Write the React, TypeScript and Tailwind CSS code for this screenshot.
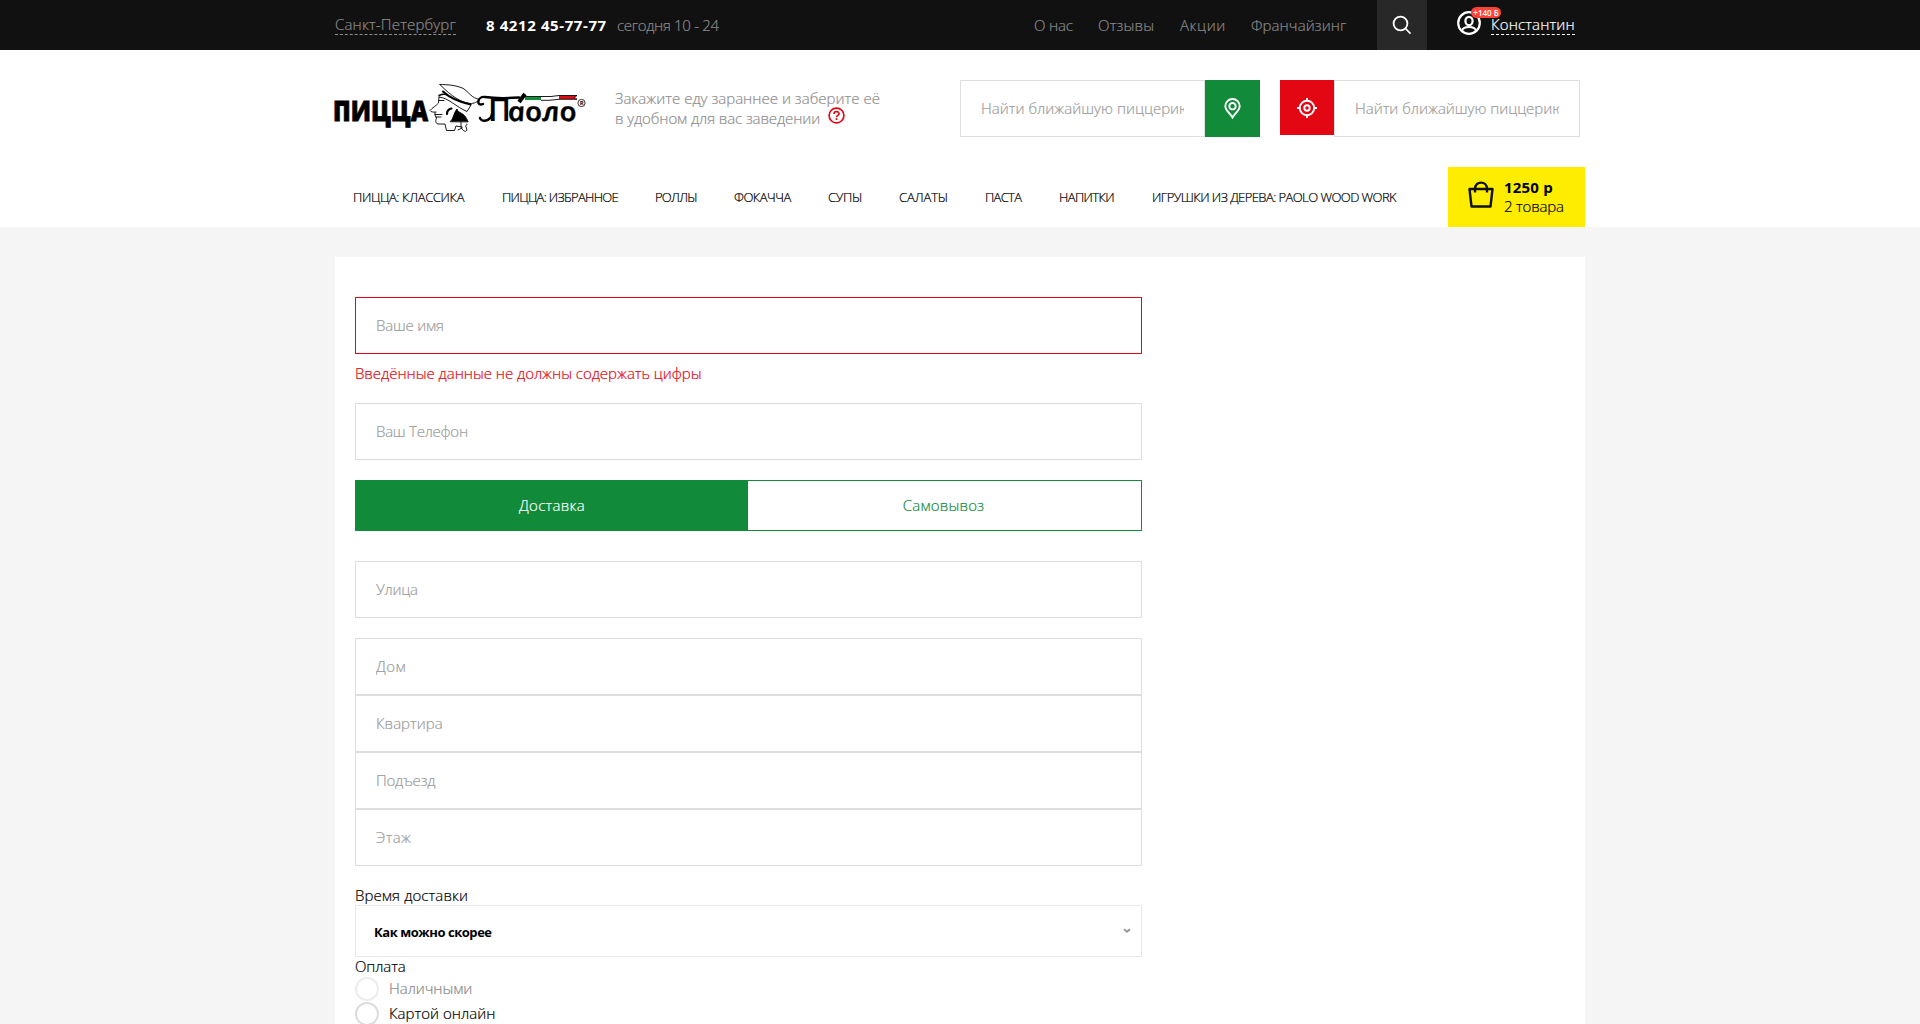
import type { ReactNode } from "react";

const navItems = [
  { label: "ПИЦЦА: КЛАССИКА", cls: "w-[149px] tracking-[-0.36px]" },
  { label: "ПИЦЦА: ИЗБРАННОЕ", cls: "w-[153px] tracking-[-0.7px]" },
  { label: "РОЛЛЫ", cls: "w-[79px] tracking-[-0.75px]" },
  { label: "ФОКАЧЧА", cls: "w-[94px] tracking-[-0.5px]" },
  { label: "СУПЫ", cls: "w-[71px] tracking-[-0.3px]" },
  { label: "САЛАТЫ", cls: "w-[86px] tracking-[-0.1px]" },
  { label: "ПАСТА", cls: "w-[74px] tracking-[-0.68px]" },
  { label: "НАПИТКИ", cls: "w-[93px] tracking-[-0.62px]" },
  { label: "ИГРУШКИ ИЗ ДЕРЕВА: PAOLO WOOD WORK", cls: "w-[260px] tracking-[-0.57px]" },
];

function Field({ placeholder, cls = "" }: { placeholder: string; cls?: string }) {
  return (
    <input
      placeholder={placeholder}
      className={`block h-[57px] w-full border bg-white px-5 pb-0.5 text-[15px] font-light placeholder:text-[#9c9c9c] ${cls}`}
    />
  );
}

function Logo() {
  return (
    <svg width="252" height="52" viewBox="0 0 252 52" className="block shrink-0 overflow-visible">
      <text x="-2" y="37" fontSize="29" fontWeight="800" stroke="#000" strokeWidth="0.8" textLength="95" lengthAdjust="spacingAndGlyphs" fontFamily="Open Sans, sans-serif">
        ПИЦЦА
      </text>
      <g fill="none" stroke="#000" strokeWidth="0.9" strokeLinejoin="round" strokeLinecap="round">
        <path d="M105 .6C112 .5 120 1 128 4.3C134 8 136 14 145 15.5C141 19 137 20 134 19.3C126 18 117 13 105 .6Z" fill="#fff" />
        <path d="M108 7.500C115 14 124 18 135.500 20.500" strokeWidth="2" />
        <path d="M104 11.500C108 9.500 111 10 113 11.500" strokeWidth="1.500" />
        <path d="M104 13C114 14 121 23 132 27.500L136 21" />
        <path d="M104 13L103.500 19C101 22 97 24 95 26.500C96 28.500 99 28 101 28M104 16.500H109M100 30.500H107M101 33H106M100 28.500V31L101.500 34C100 38 101 40 104 40H110L111.500 46.500H119.500L121 42L127 43" />
        <path d="M126 38V43C128 48 133 49 131.500 44C129 40 133 42 132 40M127 44L123 46" />
        <path d="M112 30C112 27 114 25 116.500 24.500" strokeWidth="2.200" />
        <path d="M115.500 37.500C118.500 35 118.500 29 122 25C123 30 129 27 133 37.500Z" fill="#000" />
      </g>
      <text x="153" y="37" fontSize="33" fontWeight="600" textLength="23" lengthAdjust="spacingAndGlyphs" fontFamily="Open Sans, sans-serif">
        П
      </text>
      <text transform="translate(174 37) skewX(10)" fontSize="27" fontWeight="600" fontStyle="italic" stroke="#000" strokeWidth="0.4" textLength="69" lengthAdjust="spacingAndGlyphs" fontFamily="Open Sans, sans-serif">
        аоло
      </text>
      <g fill="none" stroke="#000" strokeLinecap="round">
        <path d="M157 30C156 37 146 39 145 34M148 20C141 23 142 12 150 13C160 14.500 170 14.500 184 13.500" strokeWidth="2.400" />
        <path d="M184 18L190 10" strokeWidth="4" strokeLinecap="butt" />
      </g>
      <path d="M190 13H206V16H190Z" fill="#109038" />
      <path d="M206 13H216L224 12V15L214 16H206Z" fill="#fff" />
      <path d="M224 12H240V15H224Z" fill="#e00a14" />
      <path d="M190 12.500H216L224 11.500H242L239.500 13.500L242 15.300H224L214 16.300H206" fill="none" stroke="#000" strokeWidth="0.900" />
      <circle cx="246.500" cy="19" r="3.600" fill="none" stroke="#000" strokeWidth="0.800" />
      <text x="244.700" y="21.200" fontSize="6" fontWeight="700" fontFamily="Open Sans, sans-serif">R</text>
    </svg>
  );
}

function Radio({ label, faded, cls }: { label: string; faded?: boolean; cls: string }) {
  return (
    <label className={`flex h-[25px] items-start ${cls}`}>
      <span className={`mr-2.5 h-6 w-6 rounded-full border-2 ${faded ? "border-[#ececec]" : "border-[#dcdcdc]"}`} />
      <span className={`leading-[23px] ${faded ? "text-[#888]" : ""}`}>{label}</span>
    </label>
  );
}

function TopLink({ children, cls }: { children: ReactNode; cls: string }) {
  return <a className={`leading-5 ${cls}`}>{children}</a>;
}

export default function App() {
  return (
    <div className="h-[1024px] overflow-hidden bg-[#f5f5f5] font-['Open_Sans',sans-serif] text-[15px] font-light text-black [-webkit-text-stroke:0.2px]">
      <div className="h-[50px] bg-[#111]">
        <div className="mx-auto flex h-full w-[1250px] items-start whitespace-nowrap text-[#8a8a8a]">
          <div className="mt-[14px] h-[21px] w-[121px] border-b border-dashed border-[#8e8e8e] leading-5 tracking-[0.17px]">Санкт-Петербург</div>
          <div className="mt-[15px] ml-[30px] w-[131px] font-bold leading-5 tracking-[0.6px] text-white [-webkit-text-stroke:0px]">8 4212 45-77-77</div>
          <div className="mt-[15px] w-[417px] leading-5 tracking-[-0.32px]">сегодня 10 - 24</div>
          <nav className="mt-[15px] flex">
            <TopLink cls="w-16 tracking-[-0.15px]">О нас</TopLink>
            <TopLink cls="w-[82px] tracking-[0.18px]">Отзывы</TopLink>
            <TopLink cls="w-[71px] tracking-[0.6px]">Акции</TopLink>
            <TopLink cls="w-[126px] tracking-[0.1px]">Франчайзинг</TopLink>
          </nav>
          <button className="flex h-[50px] w-[50px] items-center justify-center bg-[#282828]">
            <svg width="20" height="20" viewBox="0 0 20 20" fill="none" stroke="#fff" strokeWidth="1.800">
              <circle cx="8.500" cy="8.500" r="6.900" />
              <path d="M13.500 13.500L18.500 18.700" />
            </svg>
          </button>
          <div className="relative mt-[11px] ml-[30px] h-6 w-6">
            <svg width="24" height="24" viewBox="0 0 24 24" fill="none" stroke="#fff" strokeWidth="2.200">
              <circle cx="12" cy="12" r="10.800" />
              <ellipse cx="12" cy="10" rx="3.600" ry="4.200" />
              <path d="M5 19.500C6 16.500 9 16 12 16S18 16.500 19 19.500" />
            </svg>
            <span className="absolute -top-1 left-3.5 h-[11px] w-[30px] rounded-md bg-[#ff4437] text-center text-[8px] leading-[11px] font-semibold text-white [-webkit-text-stroke:0px]">+140 Б</span>
          </div>
          <div className="mt-[14px] ml-2.5 h-[21px] w-[84px] border-b border-dashed border-white leading-5 tracking-[0.15px] text-white">Константин</div>
        </div>
      </div>

      <header className="h-[177px] bg-white">
        <div className="mx-auto w-[1250px]">
          <div className="flex h-[117px] items-start">
            <div className="mt-[34px] w-[280px]"><Logo /></div>
            <div className="mt-[38px] w-[345px] leading-5 whitespace-nowrap text-[#8e8e8e]">
              <div className="tracking-[0.02px]">Закажите еду зараннее и заберите её</div>
              <div className="flex">
                <span className="w-[214px] tracking-[-0.09px]">в удобном для вас заведении</span>
                <svg width="17" height="17" viewBox="0 0 17 17" fill="none" stroke="#e30613" strokeWidth="1.700" className="-mt-px -ml-px">
                  <circle cx="8.500" cy="8.500" r="7.400" />
                  <path d="M6 7C6 3.600 11 3.800 11 6.700C11 8.400 8.500 8.300 8.500 10.200M8.500 11.300V13" />
                </svg>
              </div>
            </div>
            <div className="mt-[30px] flex">
              <div className="w-[245px]"><Field placeholder="Найти ближайшую пиццерию" cls="border-[#dedede] tracking-[0.02px]" /></div>
              <button className="flex h-[57px] w-[55px] items-center justify-center bg-[#118a3a]">
                <svg width="17" height="21" viewBox="0 0 17 21" fill="none" stroke="#fff" strokeWidth="1.900">
                  <path d="M8.500 19.500C6 15.500 1.300 12 1.300 8.200A7.200 7.200 0 0 1 15.700 8.200C15.700 12 11 15.500 8.500 19.500Z" />
                  <circle cx="8.500" cy="8.200" r="3.200" />
                </svg>
              </button>
            </div>
            <div className="mt-[30px] ml-5 flex items-start">
              <button className="flex h-[55px] w-[54px] items-center justify-center bg-[#e30613]">
                <svg width="20" height="20" viewBox="0 0 20 20" fill="none" stroke="#fff" strokeWidth="1.900">
                  <circle cx="10" cy="10" r="7.200" />
                  <circle cx="10" cy="10" r="2.700" />
                  <path d="M10 0V3M10 17V20M0 10H3M17 10H20" />
                </svg>
              </button>
              <div className="w-[246px]"><Field placeholder="Найти ближайшую пиццерию" cls="border-[#dedede] tracking-[-0.02px]" /></div>
            </div>
          </div>
          <div className="flex h-[60px] justify-between">
            <nav className="flex pt-5 pl-[18px] text-[13px] leading-5 whitespace-nowrap">
              {navItems.map((n) => (
                <a key={n.label} className={n.cls}>{n.label}</a>
              ))}
            </nav>
            <div className="flex w-[137px] shrink-0 bg-[#ffed00] pt-[11px] pl-5">
              <svg width="26" height="27" viewBox="0 0 26 27" fill="none" stroke="#111" strokeWidth="2.400" strokeLinejoin="round" className="mt-[3px]">
                <path d="M1.500 8H24.500L22.500 25.500H3.500Z" />
                <path d="M7 11.500V8C7 -.5 19 -.5 19 8V11.500" />
              </svg>
              <div className="ml-[10px] leading-[19px] whitespace-nowrap">
                <div className="font-bold tracking-[0.2px] [-webkit-text-stroke:0px]">1250 р</div>
                <div className="tracking-[-0.2px]">2 товара</div>
              </div>
            </div>
          </div>
        </div>
      </header>

      <main className="mx-auto mt-[30px] h-[800px] w-[1250px] bg-white px-5 pt-10">
        <form className="w-[787px]">
          <Field placeholder="Ваше имя" cls="border-[#e30613] tracking-[-0.19px]" />
          <div className="mt-[9px] h-10 leading-5 tracking-[-0.03px] text-[#e30613]">Введённые данные не должны содержать цифры</div>
          <Field placeholder="Ваш Телефон" cls="border-[#dedede] tracking-[-0.25px]" />
          <div className="mt-5 mb-[30px] flex h-[51px] border border-[#118a3a] text-center leading-[49px]">
            <div className="w-[392px] bg-[#118a3a] tracking-[0.3px] text-white">Доставка</div>
            <div className="flex-1 pr-0.5 tracking-[0.2px] text-[#118a3a]">Самовывоз</div>
          </div>
          <Field placeholder="Улица" cls="mb-5 border-[#dedede] tracking-[-0.22px]" />
          <Field placeholder="Дом" cls="border-[#dedede] tracking-[0.4px]" />
          <Field placeholder="Квартира" cls="border-[#dedede] tracking-[0.03px]" />
          <Field placeholder="Подъезд" cls="border-[#dedede] tracking-[-0.2px]" />
          <Field placeholder="Этаж" cls="border-[#dedede] tracking-[0.4px]" />
          <div className="mt-5 h-[19px] leading-[19px] tracking-[0.1px]">Время доставки</div>
          <div className="flex h-[52px] items-center justify-between border border-[#e8e8e8] pt-[3px] pr-2.5 pl-[18px]">
            <span className="text-[13px] font-bold tracking-[-0.45px] [-webkit-text-stroke:0px]">Как можно скорее</span>
            <svg width="8" height="6" viewBox="0 0 8 6" fill="none" stroke="#999" strokeWidth="2" className="mb-1">
              <path d="M1 1.200L4 3.800L7 1.200" />
            </svg>
          </div>
          <div className="h-5 leading-[19px] tracking-[-0.1px]">Оплата</div>
          <Radio label="Наличными" faded cls="tracking-[-0.05px]" />
          <Radio label="Картой онлайн" cls="tracking-[0.02px]" />
        </form>
      </main>
    </div>
  );
}
